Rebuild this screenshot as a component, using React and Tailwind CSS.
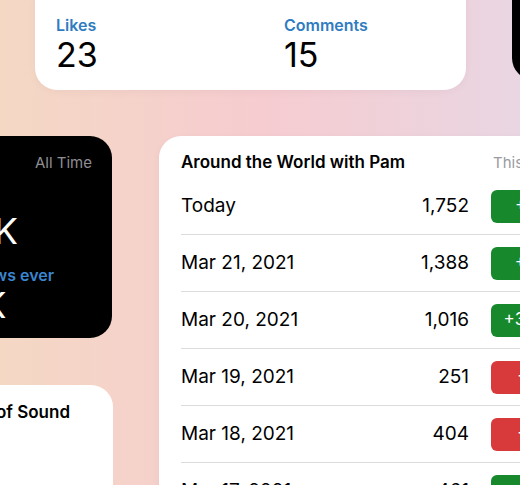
import React from 'react';

const rows = [
  { day: 'Today', count: '1,752', change: '+26.2%', up: true },
  { day: 'Mar 21, 2021', count: '1,388', change: '+36.6%', up: true },
  { day: 'Mar 20, 2021', count: '1,016', change: '+304.8%', up: true },
  { day: 'Mar 19, 2021', count: '251', change: '−37.9%', up: false },
  { day: 'Mar 18, 2021', count: '404', change: '−12.4%', up: false },
  { day: 'Mar 17, 2021', count: '461', change: '+8.7%', up: true },
];

export default function App() {
  return (
    <div
      className="relative w-[520px] h-[485px] overflow-hidden bg-gradient-to-r from-[#f4d8c4] via-[#f6ccd0] to-[#e9d6e2]"
      style={{ fontFamily: 'Inter, "Noto Sans", sans-serif' }}
    >
      {/* top stats card */}
      <div className="absolute left-[35px] top-[-20px] w-[431px] h-[110px] bg-white rounded-[22px] shadow-[0_2px_8px_rgba(0,0,0,0.04)] pt-[35px] px-[21px] flex">
        <div className="w-[228px] flex flex-col">
          <span className="text-[16px] leading-[20px] font-semibold text-[#2f7cc1]">Likes</span>
          <span className="text-[34px] leading-[40px] text-black">23</span>
        </div>
        <div className="flex flex-col">
          <span className="text-[16px] leading-[20px] font-semibold text-[#2f7cc1]">Comments</span>
          <span className="text-[34px] leading-[40px] text-black">15</span>
        </div>
      </div>

      {/* top right dark card */}
      <div className="absolute left-[512px] top-[-40px] w-[200px] h-[120px] bg-black rounded-[22px]" />

      {/* left dark card */}
      <div className="absolute left-[-92px] top-[136px] w-[204px] h-[202px] bg-black rounded-[22px] pt-[17px] px-[20px] flex flex-col">
        <div className="flex justify-end text-[15px] leading-[20px] text-[#8e8e93]">
          <span>All Time</span>
        </div>
        <span className="mt-[36px] text-[36px] leading-[44px] text-white">15.7K</span>
        <span className="mt-[12px] text-[16px] leading-[20px] font-semibold text-[#3a86d0]">Most views ever</span>
        <span className="text-[36px] leading-[40px] text-white">4.2K</span>
      </div>

      {/* bottom left card */}
      <div className="absolute left-[-150px] top-[385px] w-[263px] h-[160px] bg-white rounded-[22px] pt-[16px] px-[20px]">
        <span className="block text-right text-[17px] leading-[22px] font-semibold text-black pr-[23px]">The Art of Sound</span>
      </div>

      {/* episode table card */}
      <div className="absolute left-[159px] top-[136px] w-[444px] h-[400px] bg-white rounded-[22px] shadow-[0_2px_8px_rgba(0,0,0,0.04)] pt-[16px] px-[22px]">
        <div className="flex items-center h-[22px]">
          <span className="flex-1 text-[17px] font-semibold text-black">Around the World with Pam</span>
          <span className="w-[90px] pl-[2px] text-[15px] text-[#9a9a9f]">This Week</span>
        </div>
        <div className="mt-[4px] flex flex-col">
          {rows.map((r) => (
            <div key={r.day} className="h-[57px] flex items-center border-b border-[#dcdcdc] text-[19px] text-black">
              <span className="flex-1">{r.day}</span>
              <span className="text-right">{r.count}</span>
              <span
                className={`ml-[22px] w-[90px] h-[33px] rounded-[6px] flex items-center justify-end pr-[3px] text-[17px] text-white ${r.up ? 'bg-[#17892c]' : 'bg-[#d8393b]'}`}
              >
                {r.change}
              </span>
            </div>
          ))}
        </div>
      </div>
    </div>
  );
}
